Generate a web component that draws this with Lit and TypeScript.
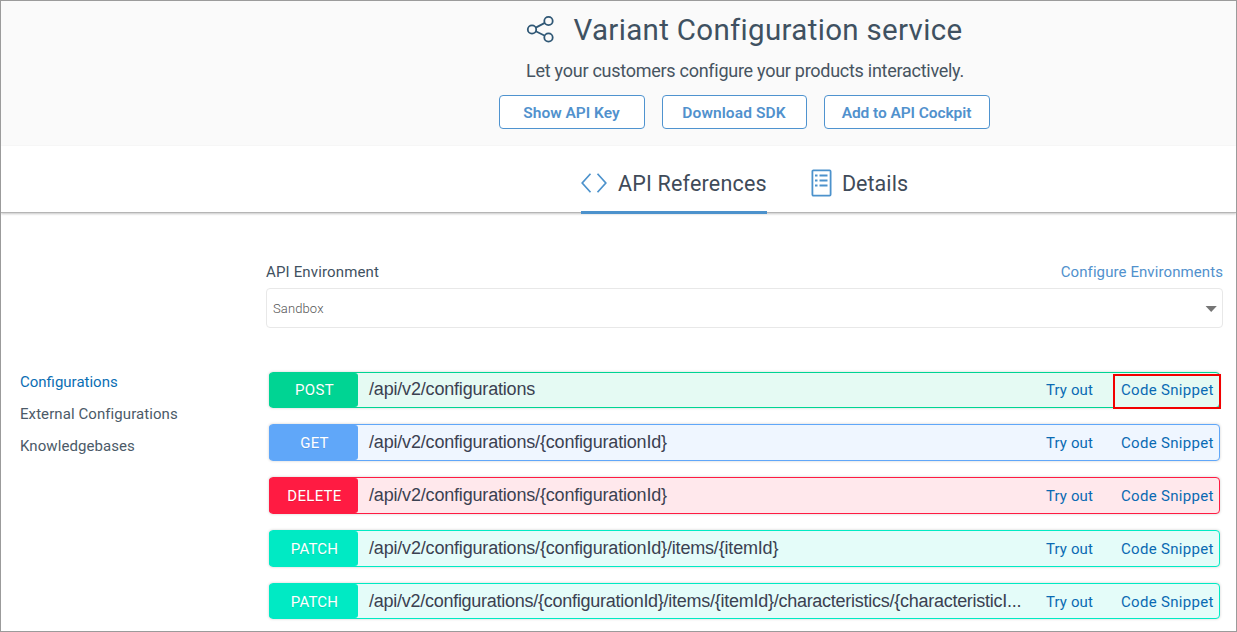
import { LitElement, html, css } from "lit";
import { customElement } from "lit/decorators.js";
import { classMap } from "lit/directives/class-map.js";

interface Operation {
  method: "POST" | "GET" | "DELETE" | "PATCH";
  path: string;
  kind: string;
  highlighted?: boolean;
}

const OPERATIONS: Operation[] = [
  { method: "POST", kind: "post", path: "/api/v2/configurations", highlighted: true },
  { method: "GET", kind: "get", path: "/api/v2/configurations/{configurationId}" },
  { method: "DELETE", kind: "delete", path: "/api/v2/configurations/{configurationId}" },
  { method: "PATCH", kind: "patch", path: "/api/v2/configurations/{configurationId}/items/{itemId}" },
  {
    method: "PATCH",
    kind: "patch last",
    path: "/api/v2/configurations/{configurationId}/items/{itemId}/characteristics/{characteristicI...",
  },
];

@customElement("operation-row")
export class OperationRow extends LitElement {
  static properties = { op: { attribute: false } };
  declare op: Operation;

  static styles = css`
    :host { display: block; }
    .row {
      box-sizing: border-box;
      display: flex;
      height: 37px;
      border: 1px solid;
      border-radius: 4px;
      box-shadow: 0 0 3px rgba(0, 0, 0, 0.19);
      color: #3b4151;
    }
    .post { height: 36px; border-color: #00d493; background: #e5faf3; }
    .get { border-color: #60a7f9; background: #eff6ff; }
    .delete { border-color: #ff1b42; background: #ffe8ec; }
    .patch { border-color: #00eac4; background: #e4fcf9; }
    .last { height: 36px; }
    .method {
      box-sizing: border-box;
      width: 89px;
      margin: 0 0 0 -1px;
      padding-left: 2px;
      border-radius: 3px;
      color: #fff;
      text-align: center;
      font-size: 15px;
      line-height: 34px;
      letter-spacing: 0.3px;
      text-shadow: 0 1px 0 rgba(0, 0, 0, 0.1);
    }
    .get .method, .delete .method { line-height: 36px; }
    .patch .method { line-height: 36px; letter-spacing: 0.15px; }
    .post .method { background: #00d493; }
    .get .method { background: #60a7f9; }
    .delete .method { background: #ff1b42; }
    .patch .method { background: #00eac4; }
    .path {
      flex: 1;
      padding-left: 11px;
      font: 18px/35px "Liberation Sans", sans-serif;
      letter-spacing: -0.182px;
      white-space: nowrap;
    }
    .post .path { line-height: 33px; }
    .last .path { letter-spacing: -0.265px; }
    .link {
      color: #0a6ab3;
      font-size: 15px;
      line-height: 37px;
      letter-spacing: 0.12px;
      white-space: nowrap;
    }
    .post .link { line-height: 35px; }
    .try { width: 67px; }
    .snippet { position: relative; width: 106px; }
    .snippet .text { padding-left: 8px; letter-spacing: 0.3px; }
    .callout {
      position: absolute;
      inset: 1px -2px -2px 0;
      border: 2px solid #f20000;
    }
  `;

  render() {
    const { method, kind, path, highlighted } = this.op;
    return html`
      <div class="row ${kind}">
        <div class="method">${method}</div>
        <div class="path">${path}</div>
        <div class="link try">Try out</div>
        <div class="link snippet">
          <span class="text">Code Snippet</span>
          ${highlighted ? html`<div class="callout"></div>` : null}
        </div>
      </div>
    `;
  }
}

@customElement("app-root")
export class AppRoot extends LitElement {
  static styles = css`
    :host { display: block; }
    .page {
      box-sizing: border-box;
      width: 1237px;
      height: 632px;
      overflow: hidden;
      border: 1px solid #9b9b9b;
      background: #fff;
      color: #3f5161;
      font-family: Roboto, sans-serif;
      white-space: nowrap;
    }
    .hero {
      box-sizing: border-box;
      height: 145px;
      padding: 9px 0 0 251px;
      background: #fafafa;
      display: flex;
      flex-direction: column;
      align-items: center;
    }
    .heading { display: flex; align-items: center; height: 40px; gap: 18px; }
    .heading svg { margin-top: -3px; }
    h1 { margin: 0; font-size: 29.5px; font-weight: 400; line-height: 40px; letter-spacing: 0.32px; }
    .lead { margin-top: 10px; padding-left: 2px; height: 22px; font-size: 18px; line-height: 22px; letter-spacing: -0.27px; color: #475461; }
    .actions { display: flex; gap: 17px; margin-top: 13px; }
    .button {
      box-sizing: border-box;
      width: 146px;
      height: 34px;
      border: 1px solid #4f93cf;
      border-radius: 4px;
      background: #fff;
      color: #5191cd;
      font-size: 15.5px;
      font-weight: 600;
      line-height: 34px;
      text-align: center;
    }
    .button.download { width: 145px; letter-spacing: 0.1px; }
    .button.cockpit { width: 166px; letter-spacing: -0.08px; }
    .tabs {
      box-sizing: border-box;
      height: 67px;
      display: flex;
      justify-content: center;
      padding-left: 252px;
      gap: 44px;
      border-bottom: 1px solid #b5b5b5;
      box-shadow: 0 1px 2px rgba(0, 0, 0, 0.22);
    }
    .tab { box-sizing: border-box; height: 68px; display: flex; align-items: center; padding-top: 7px; font-size: 21.5px; letter-spacing: 0.2px; color: #3f4b59; }
    .tab.active { width: 186px; border-bottom: 3px solid #4c92cc; z-index: 1; padding-top: 10px; }
    .tab svg { margin-bottom: 2px; }
    .tab.active svg { margin-right: 11px; }
    .tab.details { letter-spacing: 0.05px; }
    .tab.details svg { margin-right: 10px; }
    .body { display: grid; grid-template-columns: 246px 957px; padding: 49px 0 0 19px; }
    .sidebar { padding-top: 104px; font-size: 15px; color: #4b5a68; }
    .item { height: 32px; line-height: 32px; letter-spacing: 0.08px; }
    .item.current { color: #0a6eb4; letter-spacing: 0; }
    .env-head { display: flex; justify-content: space-between; height: 20px; font-size: 15px; line-height: 20px; letter-spacing: 0.15px; }
    .configure { color: #5191cd; letter-spacing: 0.09px; }
    .select {
      box-sizing: border-box;
      display: flex;
      justify-content: space-between;
      align-items: center;
      height: 40px;
      margin-top: 6px;
      padding: 0 5px 0 6px;
      border: 1px solid #e8e8e8;
      border-radius: 4px;
      font-size: 13px;
      font-weight: 300;
      letter-spacing: 0.12px;
      color: #555;
    }
    .select svg { margin-top: 2px; }
    .operations { display: flex; flex-direction: column; gap: 16px; margin: 44px 3px 0 3px; }
  `;

  render() {
    return html`
      <div class="page">
        <header class="hero">
          <div class="heading">
            <svg width="30" height="30" viewBox="0 0 30 30" fill="none" stroke="#2f5775" stroke-width="1.8">
              <circle cx="6" cy="15.5" r="4.2" />
              <circle cx="22.5" cy="7" r="4.2" />
              <circle cx="22.5" cy="23.5" r="4.2" />
              <path d="M9.8 13.6 18.8 8.9M9.8 17.3 18.8 21.7" />
            </svg>
            <h1>Variant Configuration service</h1>
          </div>
          <div class="lead">Let your customers configure your products interactively.</div>
          <div class="actions">
            <div class="button">Show API Key</div>
            <div class="button download">Download SDK</div>
            <div class="button cockpit">Add to API Cockpit</div>
          </div>
        </header>
        <nav class="tabs">
          <div class="tab active">
            <svg width="26" height="20" viewBox="0 0 26 20" fill="none" stroke="#4c92cc" stroke-width="1.7">
              <path d="M9.5 .8 1.2 10l8.3 9.2M16.5 .8 24.8 10l-8.3 9.2" />
            </svg>
            API References
          </div>
          <div class="tab details">
            <svg width="21" height="28" viewBox="0 0 21 28" fill="none" stroke="#4c92cc" stroke-width="1.8">
              <rect x="1.4" y="1.4" width="18.2" height="25.2" rx="1" />
              <path d="M4 6.5h2.5M8.5 6.5h8M4 11.5h2.5M8.5 11.5h8M4 16.5h2.5M8.5 16.5h8" />
            </svg>
            Details
          </div>
        </nav>
        <main class="body">
          <aside class="sidebar">
            ${["Configurations", "External Configurations", "Knowledgebases"].map(
              (name, i) => html`<div class=${classMap({ item: true, current: i === 0 })}>${name}</div>`
            )}
          </aside>
          <section>
            <div class="env-head">
              <span>API Environment</span>
              <span class="configure">Configure Environments</span>
            </div>
            <div class="select">
              <span>Sandbox</span>
              <svg width="12" height="6" viewBox="0 0 12 6"><path d="M.6 0h11.2L6.2 6z" fill="#757575" /></svg>
            </div>
            <div class="operations">
              ${OPERATIONS.map((op) => html`<operation-row .op=${op}></operation-row>`)}
            </div>
          </section>
        </main>
      </div>
    `;
  }
}
